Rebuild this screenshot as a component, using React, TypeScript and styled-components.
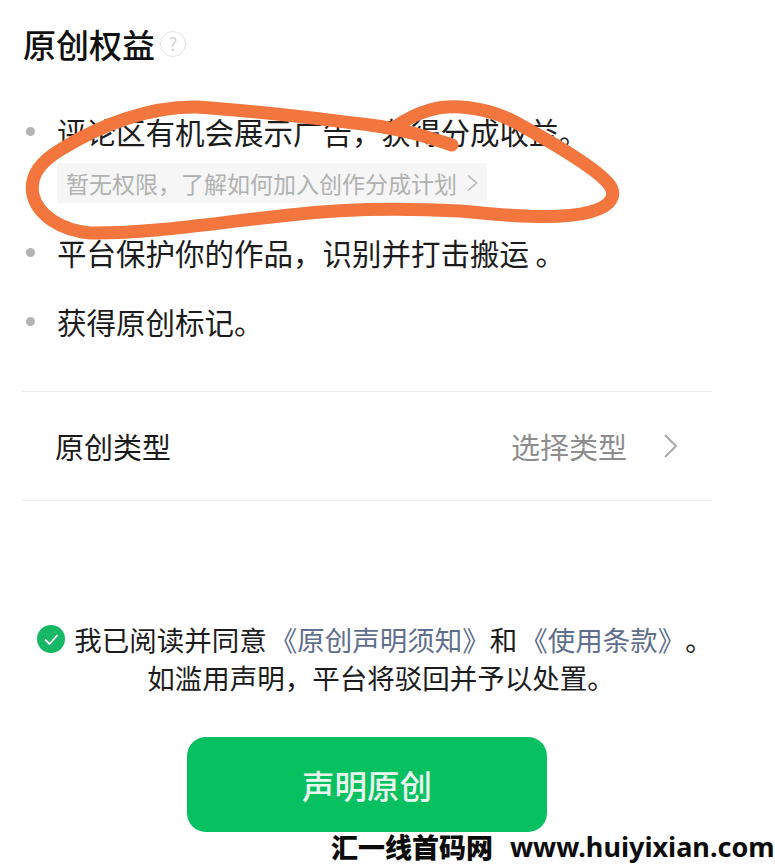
import React from 'react';
import styled, { createGlobalStyle } from 'styled-components';

const GlobalStyle = createGlobalStyle`
    html, body {
        margin: 0;
        padding: 0;
        background: #fff;
    }
    body {
        font-family: "Noto Sans CJK SC", "Noto Sans", sans-serif;
        color: #141414;
    }
`;

const benefits = [
    { text: '评论区有机会展示广告，获得分成收益。', hint: '暂无权限，了解如何加入创作分成计划' },
    { text: '平台保护你的作品，识别并打击搬运 。' },
    { text: '获得原创标记。' },
];

const App: React.FC = () => (
    <Page>
        <GlobalStyle />
        <TitleRow>
            <Title>原创权益</Title>
            <HelpIcon>?</HelpIcon>
        </TitleRow>

        <BenefitList>
            {benefits.map(item => (
                <Benefit key={item.text}>
                    <BenefitLine>
                        <Dot />
                        <span>{item.text}</span>
                    </BenefitLine>
                    {item.hint && (
                        <Hint>
                            {item.hint}
                            <svg width="13" height="20" viewBox="0 0 13 20" fill="none">
                                <path d="M2 2.5L10.5 10L2 17.5" stroke="#b4b6b5" strokeWidth="1.6" />
                            </svg>
                        </Hint>
                    )}
                </Benefit>
            ))}
        </BenefitList>

        <TypeRow>
            <span>原创类型</span>
            <TypeValue>
                选择类型
                <svg width="15" height="26" viewBox="0 0 15 26" fill="none">
                    <path d="M2 2L13 13L2 24" stroke="#a9a9a9" strokeWidth="2" />
                </svg>
            </TypeValue>
        </TypeRow>

        <Agreement>
            <AgreementLine>
                <CheckIcon viewBox="0 0 28 28">
                    <circle cx="14" cy="14" r="14" fill="#16b765" />
                    <path d="M8 14.5L12.5 19L20.5 10" fill="none" stroke="#fff" strokeWidth="1.8" />
                </CheckIcon>
                <span>我已阅读并同意</span>
                <DocLink>《原创声明须知》</DocLink>
                <span>和</span>
                <DocLink>《使用条款》</DocLink>
                <span>。</span>
            </AgreementLine>
            <div>如滥用声明，平台将驳回并予以处置。</div>
        </Agreement>

        <DeclareButton>声明原创</DeclareButton>

        <Scribble width="775" height="260" viewBox="0 0 775 260" fill="none">
            <path
                d="M452 145 C425 136 405 130 370 125 C320 119 270 112 197 107 C150 106 100 125 60 150 C35 165 30 180 33 195 C38 215 60 230 90 233 C150 234 220 222 290 215 C340 209 400 208 460 211 C510 216 560 220 590 212 C612 206 618 195 608 183 C595 168 562 148 515 122 C485 106 450 104 430 110 C415 114 405 120 393 128"
                stroke="#f4763f"
                strokeWidth="13"
                strokeLinecap="round"
                strokeLinejoin="round"
            />
        </Scribble>

        <Watermark>
            <WatermarkName>汇一线首码网</WatermarkName>
            <span>www.huiyixian.com</span>
        </Watermark>
    </Page>
);

const Page = styled.div`
    position: relative;
    width: 775px;
    height: 865px;
    overflow: hidden;
    background: #fff;
    display: flex;
    flex-direction: column;
    padding: 23px 63px 0 22px;
    box-sizing: border-box;
`;

const TitleRow = styled.div`
    display: flex;
    align-items: center;
    gap: 5px;
    height: 42px;
    padding-left: 1px;
`;

const Title = styled.h1`
    margin: 0;
    font-size: 33px;
    font-weight: 500;
    line-height: 42px;
    color: #111;
`;

const HelpIcon = styled.span`
    width: 26px;
    height: 26px;
    box-sizing: border-box;
    border: 1.5px solid #e2e2e2;
    border-radius: 50%;
    color: #d4d4d4;
    font-size: 18px;
    line-height: 23px;
    text-align: center;
`;

const BenefitList = styled.div`
    display: flex;
    flex-direction: column;
    gap: 29px;
    margin-top: 46px;
    padding-bottom: 50px;
    border-bottom: 1.5px solid #ececec;
`;

const Benefit = styled.div`
    display: flex;
    flex-direction: column;
`;

const BenefitLine = styled.div`
    display: flex;
    align-items: center;
    height: 40px;
    font-size: 29.5px;
    line-height: 40px;
    color: #1c1c1c;
`;

const Dot = styled.i`
    width: 9px;
    height: 9px;
    border-radius: 50%;
    background: #b3b5b4;
    margin: 0 22px 0 4px;
    flex: none;
`;

const Hint = styled.div`
    display: flex;
    align-items: center;
    gap: 9px;
    align-self: flex-start;
    height: 40px;
    margin: 12px 0 0 35px;
    padding: 0 8px 0 9px;
    background: #f5f6f5;
    font-size: 23px;
    color: #b0b2b1;
`;

const TypeRow = styled.div`
    display: flex;
    align-items: center;
    justify-content: space-between;
    height: 108px;
    padding: 0 34px 0 33px;
    border-bottom: 1.5px solid #ececec;
    font-size: 29px;
    color: #1a1a1a;
`;

const TypeValue = styled.div`
    display: flex;
    align-items: center;
    gap: 36px;
    color: #8d8d8d;
`;

const Agreement = styled.div`
    display: flex;
    flex-direction: column;
    align-items: center;
    margin: 119px -36px 0 -8px;
    font-size: 27.5px;
    line-height: 38px;
    color: #1c1c1c;
`;

const AgreementLine = styled.div`
    display: flex;
    align-items: center;
    margin-right: 12px;
`;

const CheckIcon = styled.svg`
    width: 28px;
    height: 28px;
    margin-right: 9px;
`;

const DocLink = styled.span`
    margin-left: 3px;
    color: #5f6f8c;
`;

const DeclareButton = styled.button`
    align-self: flex-start;
    width: 360px;
    height: 95px;
    margin: 41px 0 0 165px;
    border: none;
    border-radius: 19px;
    background: #07c160;
    color: #e9f8ef;
    font-family: inherit;
    font-size: 32.5px;
    font-weight: 500;
`;

const Scribble = styled.svg`
    position: absolute;
    top: 0;
    left: 0;
    pointer-events: none;
`;

const Watermark = styled.div`
    position: absolute;
    left: 331px;
    bottom: 1px;
    display: flex;
    align-items: center;
    gap: 17px;
    white-space: nowrap;
    font-family: "Noto Sans", "Noto Sans CJK SC", sans-serif;
    font-size: 27px;
    font-weight: 700;
    line-height: 34px;
    color: #0c0c0c;
`;

const WatermarkName = styled.span`
    font-family: "Noto Sans CJK SC", sans-serif;
    font-weight: 900;
`;

export default App;
